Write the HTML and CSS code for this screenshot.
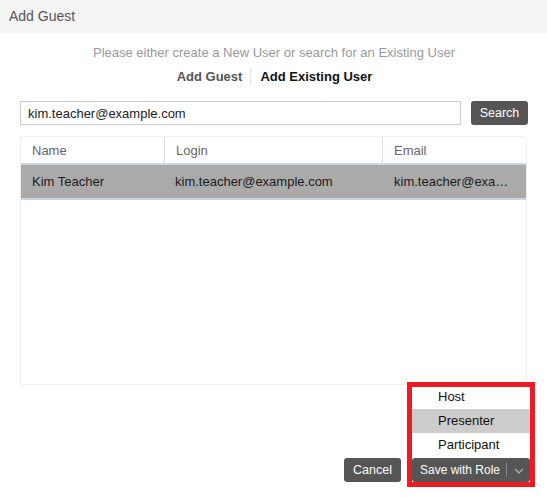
FILE: index.html
```html
<!DOCTYPE html>
<html>
<head>
<meta charset="utf-8">
<link rel="stylesheet" href="styles.css">
</head>
<body>
<div class="dialog">
  <div class="header">Add Guest</div>
  <div class="content">
    <p class="intro">Please either create a New User or search for an Existing User</p>
    <div class="tabs">
      <span class="tab">Add Guest</span>
      <span class="tab-sep"></span>
      <span class="tab active">Add Existing User</span>
    </div>
    <div class="search-row">
      <input class="search-input" type="text" value="kim.teacher@example.com">
      <button class="btn search-btn">Search</button>
    </div>
    <div class="grid">
      <table class="users">
        <colgroup>
          <col class="c-name">
          <col class="c-login">
          <col class="c-email">
        </colgroup>
        <thead>
          <tr><th>Name</th><th class="sep">Login</th><th class="sep">Email</th></tr>
        </thead>
        <tbody>
          <tr class="selected"><td>Kim Teacher</td><td>kim.teacher@example.com</td><td>kim.teacher@example.com</td></tr>
        </tbody>
      </table>
    </div>
  </div>
  <div class="footer">
    <button class="btn cancel-btn">Cancel</button>
    <div class="split">
      <ul class="menu">
        <li class="menu-item">Host</li>
        <li class="menu-item hover">Presenter</li>
        <li class="menu-item">Participant</li>
      </ul>
      <button class="btn save-btn"><span class="save-label">Save with Role</span><span class="caret-part"><svg width="10" height="6" viewBox="0 0 10 6"><path d="M1 1 L5 5 L9 1" fill="none" stroke="#b4b4b4" stroke-width="1.2"/></svg></span></button>
    </div>
  </div>
</div>
</body>
</html>
```
FILE: styles.css
```css
* { box-sizing: border-box; }
html, body { margin: 0; padding: 0; background: #fff; }
body {
  font-family: "Liberation Sans", Arial, sans-serif;
  font-size: 13px;
  color: #222;
}
.dialog { width: 547px; height: 497px; }
.header {
  height: 33px;
  line-height: 33px;
  padding-left: 9px;
  background: #f4f4f4;
  color: #555;
  font-size: 14px;
}
.content { padding: 0 19px 0 20px; }
.intro {
  margin: 12px 0 0;
  line-height: 16px;
  text-align: center;
  color: #999;
}
.tabs {
  display: flex;
  justify-content: center;
  align-items: center;
  gap: 8px;
  margin-top: 6px;
  height: 18px;
  font-weight: bold;
}
.tab { color: #555; padding-left: 1px; }
.tab.active { color: #111; }
.tab-sep { width: 1px; height: 17px; background: #e2e2e2; }
.search-row {
  display: flex;
  gap: 10px;
  margin-top: 16px;
  height: 24px;
}
.search-input {
  width: 441px;
  height: 24px;
  border: 1px solid #ccc;
  padding: 0 7px;
  font: inherit;
  font-size: 13px;
  color: #222;
  outline: none;
}
.btn {
  background: #555;
  color: #fff;
  border: none;
  border-radius: 3px;
  font-family: "Liberation Sans", Arial, sans-serif;
  font-size: 12.5px;
  height: 24px;
  padding: 0;
}
.search-btn { width: 57px; }
.grid {
  margin-top: 11px;
  margin-right: 1px;
  height: 249px;
  border: 1px solid #eee;
  border-radius: 4px;
  overflow: hidden;
}
.users {
  width: 100%;
  table-layout: fixed;
  border-collapse: separate;
  border-spacing: 0;
}
.c-name { width: 143px; }
.c-login { width: 218px; }
.users th {
  height: 28px;
  padding: 0 11px;
  text-align: left;
  font-weight: normal;
  color: #666;
  border-bottom: 2px solid #cdd7e0;
}
.users th.sep { border-left: 1px solid #ddd; }
.users td {
  height: 35px;
  padding: 0 11px;
  white-space: nowrap;
  overflow: hidden;
  text-overflow: ellipsis;
  border-bottom: 2px solid #cbd7e2;
  color: #1a1a1a;
}
.users tr.selected td { background: #aaa; }
.users tr.selected td:nth-child(3) { padding-left: 12px; padding-right: 8px; }
.footer {
  display: flex;
  justify-content: flex-end;
  gap: 11px;
  margin-top: 73px;
  padding-right: 17px;
}
.cancel-btn { width: 57px; }
.split { position: relative; }
.split::after {
  content: "";
  position: absolute;
  left: -5px;
  right: -5px;
  top: -76px;
  bottom: -5px;
  border: 5px solid #ed1c24;
  pointer-events: none;
}
.menu {
  position: absolute;
  left: 0;
  right: 0;
  bottom: calc(100% + 1px);
  margin: 0;
  padding: 0;
  list-style: none;
  background: #fff;
}
.menu-item {
  height: 24px;
  line-height: 24px;
  padding-left: 26px;
  color: #111;
}
.menu-item.hover { background: #ccc; }
.save-btn {
  display: flex;
  align-items: center;
  width: 118px;
}
.save-label {
  padding-left: 8px;
  padding-right: 6px;
  border-right: 1px solid #888;
  line-height: 14px;
  white-space: nowrap;
  font-size: 12px;
}
.caret-part {
  flex: 1;
  display: flex;
  justify-content: center;
  align-items: center;
  padding-top: 1px;
}
```
